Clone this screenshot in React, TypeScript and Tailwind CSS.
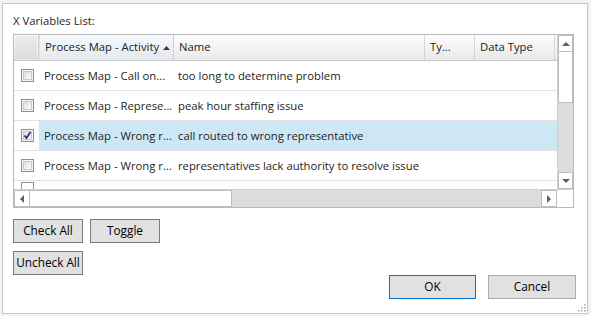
import React from "react";

const font = { fontFamily: '"Segoe UI", "Open Sans", "Noto Sans", sans-serif' };

function Check({ checked }: { checked?: boolean }) {
  return (
    <svg width="13" height="13" viewBox="0 0 13 13" className="block">
      <defs>
        <linearGradient id="cbg" x1="0" y1="0" x2="1" y2="1">
          <stop offset="0" stopColor="#dcdcdc" />
          <stop offset="1" stopColor="#ffffff" />
        </linearGradient>
      </defs>
      <rect x="0.5" y="0.5" width="12" height="12" fill="#f4f4f4" stroke="#8e8f8f" />
      <rect x="2.5" y="2.5" width="8" height="8" fill="url(#cbg)" stroke="#c9c9c9" />
      {checked && (
        <path d="M3.5 6.5 L5.5 9 L9.5 3" fill="none" stroke="#2c2c80" strokeWidth="1.7" />
      )}
    </svg>
  );
}

const rows = [
  { a: "Process Map - Call on...", n: "too long to determine problem", c: false, sel: false },
  { a: "Process Map - Represe...", n: "peak hour staffing issue", c: false, sel: false },
  { a: "Process Map - Wrong r...", n: "call routed to wrong representative", c: true, sel: true },
  { a: "Process Map - Wrong r...", n: "representatives lack authority to resolve issue", c: false, sel: false },
];

function HeaderCell({ w, children }: { w: string; children?: React.ReactNode }) {
  return (
    <div className={`${w} h-full shrink-0 flex items-center border-r border-[#d5d5d5] pl-[5px] whitespace-nowrap overflow-hidden`}>
      {children}
    </div>
  );
}

const btn = "h-[24px] bg-[#e1e1e1] border text-[#000] text-[11.8px] leading-none flex items-center justify-center whitespace-nowrap";

export default function App() {
  return (
    <div className="w-[591px] h-[316px] bg-[#f3f3f3] pt-[3px] pl-[2px] text-[11.3px] text-[#1e1e1e]" style={font}>
      <div className="w-[586px] h-[311px] bg-white border border-[#c6c6c6] relative">
        <div className="pl-[10px] pt-[9px] h-[30px] leading-[16px]">X Variables List:</div>
        <div className="ml-[10px] w-[561px] h-[174px] border border-[#b9b9b9] flex flex-col">
          <div className="flex h-[154px]">
            <div className="w-[543px] h-full overflow-hidden flex flex-col">
              {/* header */}
              <div className="h-[26px] shrink-0 flex bg-gradient-to-b from-[#fdfdfd] to-[#e9e9e9] border-b border-[#c8c8c8] text-[#222]">
                <div className="w-[25px] h-full shrink-0 border-r border-[#cfcfcf] p-[1px]">
                  <div className="w-full h-full bg-gradient-to-b from-[#ececec] to-[#dcdcdc]" />
                </div>
                <div className="w-[135px] h-full shrink-0 flex items-center pl-[5px] border-r border-[#cfcfcf] border-l border-l-[#d9e6f2] bg-gradient-to-b from-[#f6f9fc] to-[#e4e8ec] relative">
                  <span className="whitespace-nowrap">Process Map - Activity</span>
                  <svg width="7" height="4" viewBox="0 0 7 4" className="absolute left-[123px] top-[11px]">
                    <path d="M0 4 L3.5 0 L7 4 Z" fill="#3a3a3a" />
                  </svg>
                </div>
                <HeaderCell w="w-[251px]">Name</HeaderCell>
                <HeaderCell w="w-[50px]">Ty...</HeaderCell>
                <HeaderCell w="w-[80px]">Data Type</HeaderCell>
                <div className="w-[40px] h-full shrink-0 flex items-center pl-[2px]">(</div>
              </div>
              {rows.map((r, i) => (
                <div key={i} className="h-[30px] shrink-0 flex items-center border-b border-[#e3e3e3]">
                  <div className="w-[25px] h-full shrink-0 flex items-center pl-[7px] bg-white">
                    <Check checked={r.c} />
                  </div>
                  <div className={`flex-1 h-full flex items-center pt-[1px] ${r.sel ? "bg-[#cde8f4]" : ""}`}>
                    <div className="w-[135px] pl-[5px] whitespace-nowrap shrink-0 overflow-hidden">{r.a}</div>
                    <div className="w-[251px] pl-[4px] whitespace-nowrap shrink-0">{r.n}</div>
                  </div>
                </div>
              ))}
              <div className="h-[8px] shrink-0 flex">
                <div className="w-[25px] pl-[7px] pt-[1px]">
                  <div className="w-[13px] h-[7px] border-t border-x border-[#8e8f8f]" />
                </div>
              </div>
            </div>
            {/* vertical scrollbar */}
            <div className="w-[16px] h-full bg-[#dcdcdc] border-l border-[#d0d0d0] flex flex-col">
              <div className="h-[17px] bg-white border border-[#bdbdbd] flex items-center justify-center">
                <svg width="8" height="4" viewBox="0 0 8 4"><path d="M0 4 L4 0 L8 4 Z" fill="#606060" /></svg>
              </div>
              <div className="h-[51px] bg-white border-x border-b border-[#bdbdbd]" />
              <div className="flex-1" />
              <div className="h-[17px] bg-white border border-[#bdbdbd] flex items-center justify-center">
                <svg width="8" height="4" viewBox="0 0 8 4"><path d="M0 0 L4 4 L8 0 Z" fill="#606060" /></svg>
              </div>
            </div>
          </div>
          <div className="flex h-[18px] border-t border-[#d0d0d0]">
            <div className="w-[543px] h-full bg-[#dcdcdc] flex">
              <div className="w-[16px] bg-white border border-[#bdbdbd] flex items-center justify-center">
                <svg width="4" height="8" viewBox="0 0 4 8"><path d="M4 0 L0 4 L4 8 Z" fill="#606060" /></svg>
              </div>
              <div className="w-[202px] bg-white border-y border-r border-[#bdbdbd]" />
              <div className="flex-1" />
              <div className="w-[16px] bg-white border border-[#bdbdbd] flex items-center justify-center">
                <svg width="4" height="8" viewBox="0 0 4 8"><path d="M0 0 L4 4 L0 8 Z" fill="#606060" /></svg>
              </div>
            </div>
            <div className="w-[16px] h-full bg-white" />
          </div>
        </div>

        <div className="pl-[10px] pt-[11px] flex gap-[7px]">
          <button className={`${btn} w-[70px] border-[#7a7a7a]`}>Check All</button>
          <button className={`${btn} w-[70px] border-[#7a7a7a]`}>Toggle</button>
        </div>
        <div className="pl-[10px] pt-[8px] flex">
          <button className={`${btn} w-[70px] border-[#7a7a7a]`}>Uncheck All</button>
        </div>
        <div className="flex justify-end gap-[12px] pr-[11px]">
          <button className={`${btn} w-[87px] border-[#0078d7]`}>OK</button>
          <button className={`${btn} w-[88px] border-[#adadad]`}>Cancel</button>
        </div>
        <svg width="10" height="10" viewBox="0 0 10 10" className="absolute right-[1px] bottom-[1px]">
          {[
            [8, 2], [8, 5], [8, 8], [5, 5], [5, 8], [2, 8],
          ].map(([x, y], i) => (
            <rect key={i} x={x} y={y} width="1.5" height="1.5" fill="#a8a8a8" />
          ))}
        </svg>
      </div>
    </div>
  );
}
